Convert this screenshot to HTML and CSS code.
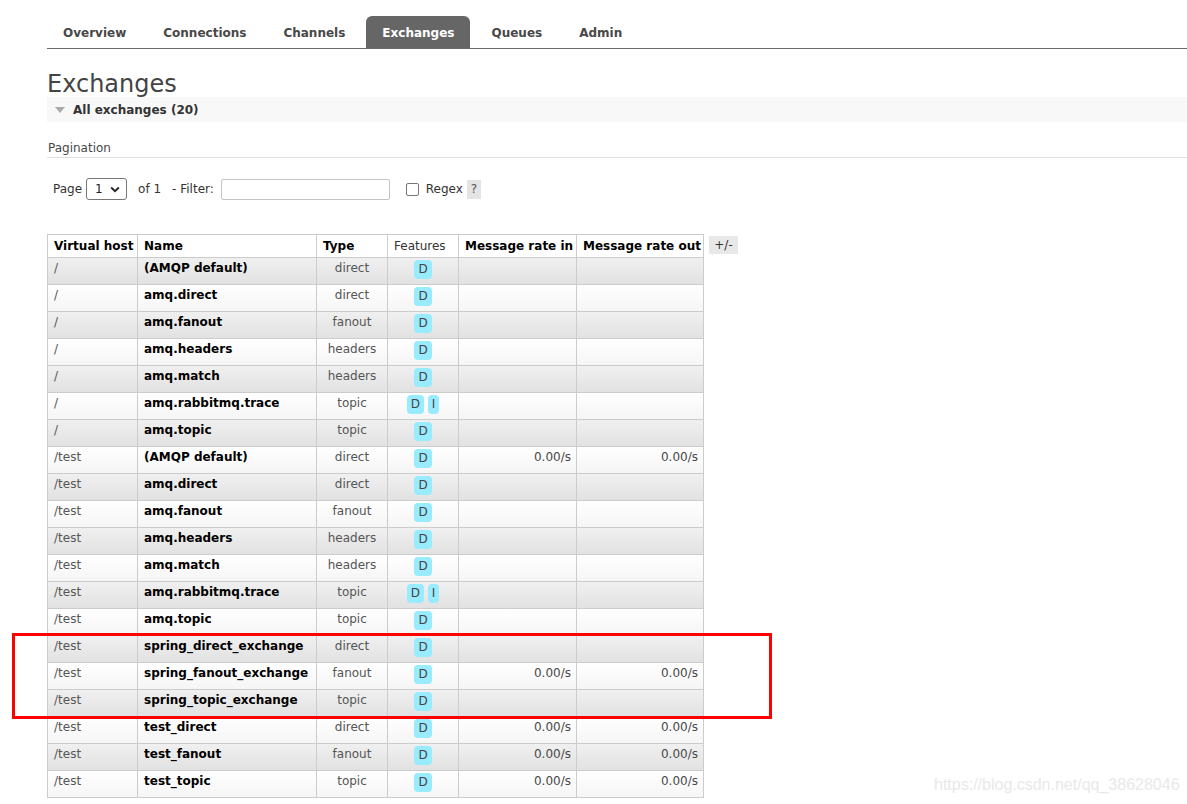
FILE: index.html
```html
<!DOCTYPE html>
<html>
<head>
<meta charset="utf-8">
<title>Exchanges</title>
<link rel="stylesheet" href="styles.css">
</head>
<body>
<div class="page">
  <nav class="menu">
    <ul>
      <li><a>Overview</a></li>
      <li><a>Connections</a></li>
      <li><a>Channels</a></li>
      <li class="active"><a>Exchanges</a></li>
      <li><a>Queues</a></li>
      <li><a>Admin</a></li>
    </ul>
  </nav>

  <h1>Exchanges</h1>
  <div class="section-bar"><span class="tri"></span><span>All exchanges (20)</span></div>

  <div class="pag-title">Pagination</div>
  <div class="filter-row">
    <span class="lbl">Page</span>
    <div class="select"><span>1</span><svg width="10" height="7" viewBox="0 0 10 7"><path d="M1.2 1.5 L5 5.2 L8.8 1.5" fill="none" stroke="#222" stroke-width="1.8"/></svg></div>
    <span class="of">of 1</span>
    <span class="flt">- Filter:</span>
    <input class="filter" type="text">
    <input class="chk" type="checkbox">
    <span class="regex">Regex</span>
    <span class="help">?</span>
  </div>

  <div class="table-wrap">
    <table class="list">
      <colgroup>
        <col class="c1"><col class="c2"><col class="c3"><col class="c4"><col class="c5"><col class="c6">
      </colgroup>
      <thead>
        <tr><th>Virtual host</th><th>Name</th><th>Type</th><th class="plain">Features</th><th>Message rate in</th><th>Message rate out</th></tr>
      </thead>
      <tbody>
        <tr><td>/</td><td class="name">(AMQP default)</td><td class="type">direct</td><td class="feat"><span class="b">D</span></td><td class="rate"></td><td class="rate"></td></tr>
        <tr><td>/</td><td class="name">amq.direct</td><td class="type">direct</td><td class="feat"><span class="b">D</span></td><td class="rate"></td><td class="rate"></td></tr>
        <tr><td>/</td><td class="name">amq.fanout</td><td class="type">fanout</td><td class="feat"><span class="b">D</span></td><td class="rate"></td><td class="rate"></td></tr>
        <tr><td>/</td><td class="name">amq.headers</td><td class="type">headers</td><td class="feat"><span class="b">D</span></td><td class="rate"></td><td class="rate"></td></tr>
        <tr><td>/</td><td class="name">amq.match</td><td class="type">headers</td><td class="feat"><span class="b">D</span></td><td class="rate"></td><td class="rate"></td></tr>
        <tr><td>/</td><td class="name">amq.rabbitmq.trace</td><td class="type">topic</td><td class="feat"><span class="b">D</span> <span class="b">I</span></td><td class="rate"></td><td class="rate"></td></tr>
        <tr><td>/</td><td class="name">amq.topic</td><td class="type">topic</td><td class="feat"><span class="b">D</span></td><td class="rate"></td><td class="rate"></td></tr>
        <tr><td>/test</td><td class="name">(AMQP default)</td><td class="type">direct</td><td class="feat"><span class="b">D</span></td><td class="rate">0.00/s</td><td class="rate">0.00/s</td></tr>
        <tr><td>/test</td><td class="name">amq.direct</td><td class="type">direct</td><td class="feat"><span class="b">D</span></td><td class="rate"></td><td class="rate"></td></tr>
        <tr><td>/test</td><td class="name">amq.fanout</td><td class="type">fanout</td><td class="feat"><span class="b">D</span></td><td class="rate"></td><td class="rate"></td></tr>
        <tr><td>/test</td><td class="name">amq.headers</td><td class="type">headers</td><td class="feat"><span class="b">D</span></td><td class="rate"></td><td class="rate"></td></tr>
        <tr><td>/test</td><td class="name">amq.match</td><td class="type">headers</td><td class="feat"><span class="b">D</span></td><td class="rate"></td><td class="rate"></td></tr>
        <tr><td>/test</td><td class="name">amq.rabbitmq.trace</td><td class="type">topic</td><td class="feat"><span class="b">D</span> <span class="b">I</span></td><td class="rate"></td><td class="rate"></td></tr>
        <tr><td>/test</td><td class="name">amq.topic</td><td class="type">topic</td><td class="feat"><span class="b">D</span></td><td class="rate"></td><td class="rate"></td></tr>
        <tr><td>/test</td><td class="name">spring_direct_exchange</td><td class="type">direct</td><td class="feat"><span class="b">D</span></td><td class="rate"></td><td class="rate"></td></tr>
        <tr><td>/test</td><td class="name">spring_fanout_exchange</td><td class="type">fanout</td><td class="feat"><span class="b">D</span></td><td class="rate">0.00/s</td><td class="rate">0.00/s</td></tr>
        <tr><td>/test</td><td class="name">spring_topic_exchange</td><td class="type">topic</td><td class="feat"><span class="b">D</span></td><td class="rate"></td><td class="rate"></td></tr>
        <tr><td>/test</td><td class="name">test_direct</td><td class="type">direct</td><td class="feat"><span class="b">D</span></td><td class="rate">0.00/s</td><td class="rate">0.00/s</td></tr>
        <tr><td>/test</td><td class="name">test_fanout</td><td class="type">fanout</td><td class="feat"><span class="b">D</span></td><td class="rate">0.00/s</td><td class="rate">0.00/s</td></tr>
        <tr><td>/test</td><td class="name">test_topic</td><td class="type">topic</td><td class="feat"><span class="b">D</span></td><td class="rate">0.00/s</td><td class="rate">0.00/s</td></tr>
      </tbody>
    </table>
    <span class="toggle">+/-</span>
  </div>
</div>

<div class="highlight"></div>
<div class="watermark">https://blog.csdn.net/qq_38628046</div>
</body>
</html>
```

FILE: styles.css
```css
html, body {
  margin: 0;
  padding: 0;
  background: #fff;
}
body {
  position: relative;
  height: 804px;
  overflow: hidden;
  font-family: "DejaVu Sans", Verdana, sans-serif;
  font-size: 12px;
  color: #484848;
}
.page {
  padding-left: 47px;
}

/* nav */
.menu {
  padding-top: 16px;
  border-bottom: 1px solid #6a6a6a;
}
.menu ul {
  display: flex;
  list-style: none;
  margin: 0;
  padding: 0;
}
.menu li {
  margin-right: 5px;
}
.menu a {
  display: block;
  height: 32px;
  line-height: 34px;
  padding: 0 16px;
  font-weight: bold;
  color: #484848;
  border-radius: 6px 6px 0 0;
}
.menu li.active a {
  background: #666;
  color: #fff;
}

h1 {
  margin: 23px 0 0;
  font-size: 24px;
  line-height: 25px;
  font-weight: normal;
  color: #444;
}

.section-bar {
  display: flex;
  align-items: center;
  height: 25px;
  background: #f8f8f8;
  padding-left: 8px;
  font-weight: bold;
  color: #333;
}
.tri {
  width: 0;
  height: 0;
  border-left: 5px solid transparent;
  border-right: 5px solid transparent;
  border-top: 6px solid #aaa;
  margin-right: 8px;
  margin-top: 1px;
}

.pag-title {
  margin-top: 19px;
  line-height: 14px;
  padding-bottom: 2px;
  padding-left: 1px;
  border-bottom: 1px solid #e0e0e0;
  color: #484848;
}

.filter-row {
  display: flex;
  align-items: center;
  height: 22px;
  margin-top: 20px;
  padding-left: 6px;
  color: #333;
}
.lbl { margin-right: 4px; }
.select {
  box-sizing: border-box;
  width: 41px;
  height: 22px;
  border: 1px solid #767676;
  border-radius: 3px;
  display: flex;
  align-items: center;
  padding-left: 8px;
  gap: 7px;
  color: #222;
}
.of { margin-left: 11px; }
.flt { margin-left: 11px; }
.filter {
  box-sizing: border-box;
  width: 169px;
  height: 21px;
  margin: 0 0 0 7px;
  border: 1px solid #c4c4c4;
  border-radius: 2px;
  padding: 0;
}
.chk {
  -webkit-appearance: none;
  appearance: none;
  box-sizing: border-box;
  width: 13px;
  height: 13px;
  margin: 0 0 0 16px;
  border: 1px solid #767676;
  border-radius: 2px;
  background: #fff;
}
.regex { margin-left: 7px; }
.help {
  margin-left: 4px;
  width: 14px;
  height: 19px;
  line-height: 19px;
  text-align: center;
  background: #e4e4e4;
  color: #555;
}

/* table */
.table-wrap {
  display: flex;
  align-items: flex-start;
  gap: 5px;
  margin-top: 34px;
}
table.list {
  border-collapse: collapse;
  table-layout: fixed;
  width: 656px;
  border: 1px solid #ccc;
}
col.c1 { width: 90px; }
col.c2 { width: 179px; }
col.c3 { width: 71px; }
col.c4 { width: 71px; }
col.c5 { width: 118px; }
col.c6 { width: 127px; }
table.list th,
table.list td {
  border: 1px solid #ccc;
  line-height: 14px;
  vertical-align: top;
  white-space: nowrap;
  overflow: visible;
}
table.list th {
  padding: 4px 6px;
  text-align: left;
  background: #fff;
  color: #000;
  font-weight: bold;
}
table.list th.plain {
  font-weight: normal;
  color: #333;
}
table.list td {
  padding: 3px 6px 9px;
  color: #555;
}
table.list tbody tr:nth-child(odd) {
  background: linear-gradient(#f0f0f0, #e1e1e1);
}
table.list tbody tr:nth-child(even) {
  background: linear-gradient(#ffffff, #f5f5f5);
}
td.name {
  font-weight: bold;
  color: #000 !important;
}
td.type { text-align: center; }
td.feat { text-align: center; }
td.rate { text-align: right; padding-right: 5px !important; color: #484848 !important; }
.b {
  display: inline-block;
  vertical-align: top;
  height: 19px;
  line-height: 19px;
  margin: -1px 0 -4px;
  padding: 0 4px;
  border-radius: 4px;
  background: #99ebff;
  color: #444;
}
.toggle {
  margin-top: 2px;
  width: 29px;
  height: 18px;
  line-height: 18px;
  text-align: center;
  background: #e8e8e8;
  color: #333;
}

/* overlays */
.highlight {
  position: absolute;
  left: 12px;
  top: 633px;
  width: 754px;
  height: 80px;
  border: 3px solid #f00;
}
.watermark {
  position: absolute;
  left: 934px;
  top: 776px;
  font-family: "Liberation Sans", Arial, sans-serif;
  font-size: 16px;
  line-height: 18px;
  color: #e9e9e9;
}
```
